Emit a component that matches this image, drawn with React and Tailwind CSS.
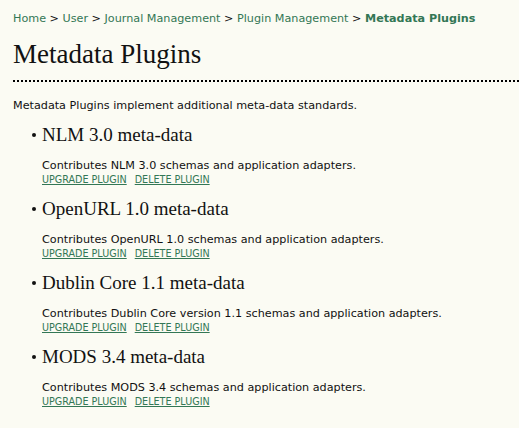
import React from "react";

const plugins = [
  { name: "NLM 3.0 meta-data", desc: "Contributes NLM 3.0 schemas and application adapters." },
  { name: "OpenURL 1.0 meta-data", desc: "Contributes OpenURL 1.0 schemas and application adapters." },
  { name: "Dublin Core 1.1 meta-data", desc: "Contributes Dublin Core version 1.1 schemas and application adapters." },
  { name: "MODS 3.4 meta-data", desc: "Contributes MODS 3.4 schemas and application adapters." },
];

export default function App() {
  return (
    <div className="min-h-screen w-full bg-[#fbfbf3] text-[#111111] pl-[13px] font-['DejaVu_Sans',Verdana,sans-serif]">
      <div className="pt-[12px] text-[11.2px] leading-[14px] text-[#111111]">
        <a className="text-[#337755]">Home</a> &gt; <a className="text-[#337755]">User</a> &gt;{" "}
        <a className="text-[#337755]">Journal Management</a> &gt; <a className="text-[#337755]">Plugin Management</a> &gt;{" "}
        <a className="text-[#337755] font-bold">Metadata Plugins</a>
      </div>
      <h2 className="mt-[13px] pb-[11px] border-b-2 border-dotted border-black font-['Liberation_Serif',Georgia,serif] text-[27px] leading-[30px] font-normal">
        Metadata Plugins
      </h2>
      <p className="mt-[17px] text-[11.2px] leading-[14px]">
        Metadata Plugins implement additional meta-data standards.
      </p>
      <ul className="mt-[11px]">
        {plugins.map((p) => (
          <li key={p.name} className="mb-[11px]">
            <div className="flex items-center">
              <span className="ml-[19px] mr-[6px] w-[4px] h-[4px] rounded-full bg-[#111111]" />
              <h3 className="font-['Liberation_Serif',Georgia,serif] text-[19px] leading-[22px] font-normal">{p.name}</h3>
            </div>
            <div className="pl-[29px]">
              <p className="mt-[13px] text-[11.2px] leading-[14px]">{p.desc}</p>
              <div className="text-[9.6px] leading-[14px] uppercase">
                <a className="text-[#337755] underline">Upgrade Plugin</a>
                <a className="ml-[8px] text-[#337755] underline">Delete Plugin</a>
              </div>
            </div>
          </li>
        ))}
      </ul>
    </div>
  );
}
